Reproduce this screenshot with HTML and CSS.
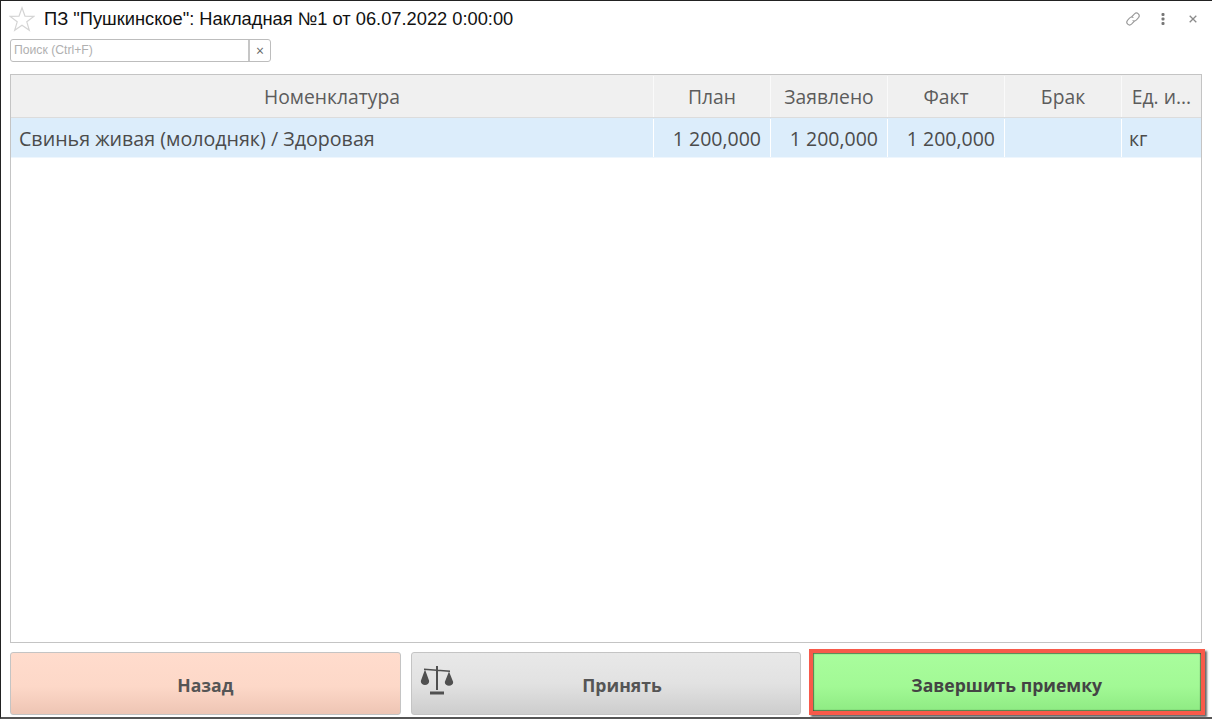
FILE: index.html
```html
<!DOCTYPE html>
<html lang="ru">
<head>
  <meta charset="UTF-8">
  <title>Накладная</title>
  <link rel="stylesheet" href="styles.css">
</head>
<body>
  <div class="window">
    <div class="title-bar">
      <svg class="star" width="26" height="26" viewBox="0 0 26 26"><path d="M13 1.8l3 8.3 8.8.3-7 5.400 2.500 8.500-7.300-5-7.300 5 2.500-8.500-7-5.400 8.800-.3z" fill="#fff" stroke="#d4d4d4" stroke-width="1.2"/></svg>
      <span class="title">ПЗ "Пушкинское": Накладная №1 от 06.07.2022 0:00:00</span>
      <div class="title-icons">
        <svg width="16" height="16" viewBox="0 0 16 16" fill="none" stroke="#9a9a9a" stroke-width="1.1"><path d="M6.500 6L9.500 2.800a2.800 2.800 0 0 1 4 3.900l-2.200 2.300a2.800 2.800 0 0 1-3.700.4"/><path d="M9.500 10L6.500 13.200a2.800 2.800 0 0 1-4-3.900l2.200-2.300a2.800 2.800 0 0 1 3.700-.4"/></svg>
        <svg width="4" height="12" viewBox="0 0 4 12" fill="#777"><rect x=".5" width="3" height="3" rx="1"/><rect x=".5" y="4.500" width="3" height="3" rx="1"/><rect x=".5" y="9" width="3" height="3" rx="1"/></svg>
        <svg class="close" width="8" height="8" viewBox="0 0 8 8" stroke="#8a8a8a" stroke-width="1.3"><path d="M.7.7l6.600 6.600M7.300.7L.7 7.300"/></svg>
      </div>
    </div>
    <div class="search">
      <div class="search-input">Поиск (Ctrl+F)</div>
      <div class="search-clear">×</div>
    </div>
    <div class="grid">
      <div class="row head">
        <div class="cell c-name center">Номенклатура</div>
        <div class="cell c-num center">План</div>
        <div class="cell c-num center">Заявлено</div>
        <div class="cell c-num center">Факт</div>
        <div class="cell c-num center">Брак</div>
        <div class="cell c-unit center">Ед. и...</div>
      </div>
      <div class="row selected">
        <div class="cell c-name">Свинья живая (молодняк) / Здоровая</div>
        <div class="cell c-num right">1 200,000</div>
        <div class="cell c-num right">1 200,000</div>
        <div class="cell c-num right">1 200,000</div>
        <div class="cell c-num right"></div>
        <div class="cell c-unit">кг</div>
      </div>
    </div>
    <div class="buttons">
      <div class="btn btn-back">Назад</div>
      <div class="btn btn-accept">
        <svg class="scales" width="34" height="34" viewBox="0 0 34 34" fill="#505050"><path d="M16 2h2v24h-2zM10 27.500h14v3H10zM4 4.500l26 2v1.500L4 6z"/><path d="M5 5.500L.8 17c0 2.500 2 4 4.200 4s4.200-1.500 4.200-4zM29 7.500L24.800 18c0 2.500 2 3.800 4.200 3.800s4.200-1.300 4.200-3.800z"/></svg>
        <span class="btn-label">Принять</span>
      </div>
      <div class="btn btn-finish">Завершить приемку</div>
    </div>
  </div>
</body>
</html>
```
FILE: styles.css
```css
html, body { margin: 0; padding: 0; }
body { width: 1212px; height: 719px; overflow: hidden; background: #fff; font-family: "Open Sans", sans-serif; color: #4b4b4b; }
.window { box-sizing: border-box; height: 719px; border-top: 1px solid #222; border-left: 1px solid #222; border-bottom: 2px solid #555; padding: 0 10px 0 9px; display: flex; flex-direction: column; }

.title-bar { display: flex; align-items: center; height: 36px; margin-left: -1px; flex: none; }
.star { margin-right: 9px; flex: none; }
.title { font-family: "Liberation Sans", sans-serif; font-size: 18.3px; color: #111; }
.title-icons { margin-left: auto; display: flex; align-items: center; gap: 20px; padding-right: 5px; }
.close { margin-left: 4px; }

.search { display: flex; width: 261px; height: 23px; box-sizing: border-box; border: 1px solid #bdbdbd; border-radius: 3px; flex: none; margin-top: 2px; }
.search-input { flex: 1; border-right: 2px solid #c6c6c6; font-family: "Liberation Sans", sans-serif; font-size: 12.2px; line-height: 21px; padding-left: 3px; color: #b0b0b0; }
.search-clear { width: 20px; text-align: center; font-size: 14px; line-height: 21px; color: #666; }

.grid { flex: none; height: 569px; box-sizing: border-box; margin-top: 12px; border: 1px solid #c4c4c4; }
.row { display: flex; box-sizing: border-box; }
.head { height: 43px; padding-top: 1px; background: #f0f0f0; border-bottom: 1px solid #dcdcdc; font-size: 19.3px; color: #5c5c5c; }
.selected { height: 40px; padding-top: 1px; background: #dcedfb; border-bottom: 1px solid #eef6fd; font-size: 19.5px; }
.selected .c-name { font-size: 19.65px; }
.cell { box-sizing: border-box; display: flex; align-items: center; border-right: 1px solid #fff; white-space: nowrap; }
.head .cell { border-right-color: #fafafa; }
.c-name { width: 643px; padding-left: 8px; }
.c-num { width: 117px; padding-right: 9px; }
.c-unit { flex: 1; padding-left: 7px; border-right: 0; }
.center { justify-content: center; padding: 0; }
.right { justify-content: flex-end; }

.buttons { display: flex; gap: 10px; margin-top: 9px; flex: none; }
.btn { position: relative; box-sizing: border-box; flex: 1 1 0; height: 63px; padding-top: 2px; display: flex; align-items: center; justify-content: center; border: 1px solid #c4c4c4; border-radius: 3px; font-size: 17.6px; font-weight: 700; color: #555; }
.btn-back { background: linear-gradient(#ffdccd 0%, #fdd8c8 55%, #eec5b4 100%); }
.btn-accept { background: linear-gradient(#e8e8e8 0%, #e2e2e2 50%, #cdcdcd 100%); }
.btn-label { margin-left: 32px; }
.btn-finish { background: linear-gradient(#a9fd9d 0%, #a2f995 55%, #8ce981 100%); border-color: #4f6f4a; color: #444; }
.btn-finish::after { content: ""; position: absolute; left: -3px; right: -4px; top: -4px; bottom: -1px; border: 4px solid #f85a4a; box-shadow: inset 1px 1px 1px rgba(50, 80, 50, .7), inset -1px -1px 1px rgba(50, 80, 50, .7), 2px 2px 2px #666; }
.scales { position: absolute; left: 8px; top: 11px; }
```
